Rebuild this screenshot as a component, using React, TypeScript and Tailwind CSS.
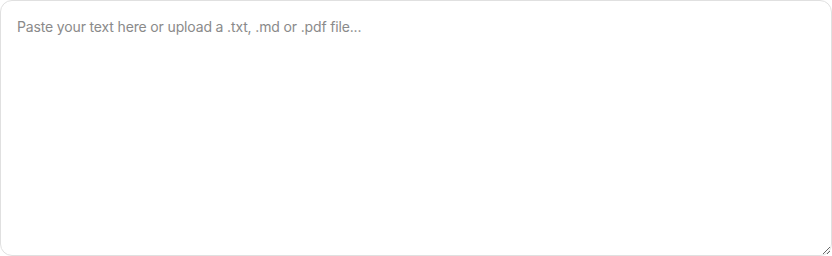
import React from "react";

export default function App() {
  return (
    <div className="w-[832px] h-[256px] bg-white">
      <textarea
        className="block w-[832px] h-[256px] rounded-xl border border-[#e0e0e0] bg-white px-4 py-4 text-[14px] leading-5 tracking-[-0.15px] text-[#171717] placeholder:text-[#8a8a8a] outline-none"
        style={{ fontFamily: "Inter, 'Liberation Sans', sans-serif" }}
        placeholder="Paste your text here or upload a .txt, .md or .pdf file..."
      />
    </div>
  );
}
